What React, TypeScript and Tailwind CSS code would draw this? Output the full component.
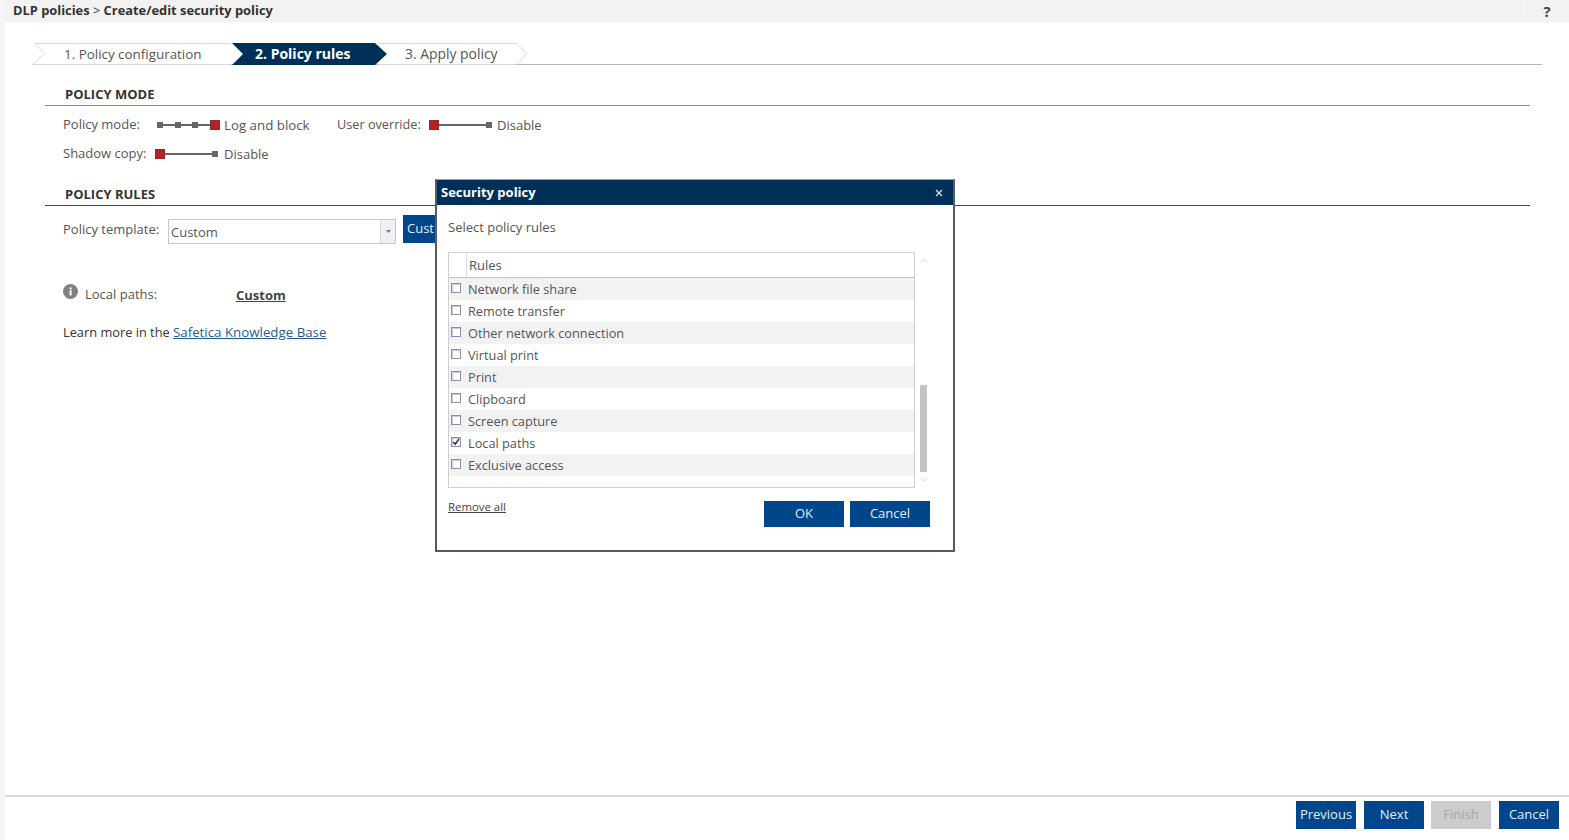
import React from "react";

const F = "[font-family:'Open_Sans','Noto_Sans',sans-serif]";

function Node({ active }: { active?: boolean }) {
  return active ? (
    <span className="h-[10px] w-[10px] shrink-0 bg-[#b72025] border border-[#8d2a2a]" />
  ) : (
    <span className="h-[6px] w-[6px] shrink-0 bg-[#666]" />
  );
}

function Slider({ stops, active, className }: { stops: number; active: number; className: string }) {
  const items = Array.from({ length: stops }, (_, i) => i);
  return (
    <div className={`relative flex h-[12px] items-center justify-between ${className}`}>
      <div className="absolute left-[3px] right-[3px] top-[5px] h-[2px] bg-[#666]" />
      {items.map((i) => (
        <span key={i} className="relative z-10 flex">
          <Node active={i === active} />
        </span>
      ))}
    </div>
  );
}

function Btn({ children, className = "", disabled }: { children: React.ReactNode; className?: string; disabled?: boolean }) {
  return (
    <button
      className={`flex items-center justify-center text-[13px] ${
        disabled ? "bg-[#cccccc] text-[#a6a6a6]" : "bg-[#00468b] text-[#e6edf5]"
      } ${className}`}
    >
      {children}
    </button>
  );
}

const rules: [string, boolean][] = [
  ["Network file share", false],
  ["Remote transfer", false],
  ["Other network connection", false],
  ["Virtual print", false],
  ["Print", false],
  ["Clipboard", false],
  ["Screen capture", false],
  ["Local paths", true],
  ["Exclusive access", false],
];

function Check({ checked }: { checked: boolean }) {
  return (
    <span className="relative mb-[2px] ml-[2px] flex h-[10px] w-[10px] shrink-0 items-center justify-center border border-[#8a90ac] bg-white shadow-[inset_1px_1px_0_#c9cde0]">
      {checked && (
        <svg className="absolute left-0 top-0" width="8" height="8" viewBox="0 0 9 9">
          <path d="M1.5 4.5L3.6 7L7.8 1.2" fill="none" stroke="#2b3350" strokeWidth="1.8" />
        </svg>
      )}
    </span>
  );
}

function Modal() {
  return (
    <div className="absolute left-[435px] top-[179px] z-20 flex h-[373px] w-[520px] flex-col border-2 border-t border-[#555b60] border-t-[#9aa0a6] bg-white">
      <div className="flex h-[25px] shrink-0 items-center justify-between bg-[#003057] pl-[4px] pr-[10px] text-[13px] font-bold text-white">
        <span>Security policy</span>
        <svg width="8" height="8" viewBox="0 0 8 8" className="mt-[1px]">
          <path d="M1 1L7 7M7 1L1 7" stroke="#dfe6ee" strokeWidth="1.2" />
        </svg>
      </div>
      <div className="mt-[13px] pl-[11px] text-[13px] leading-[18px] text-[#555]">Select policy rules</div>
      <div className="ml-[11px] mt-[16px] flex">
        <div className="h-[236px] w-[467px] border border-[#d0d0d0]">
          <div className="flex h-[25px] border-b border-[#c4c4c4]">
            <div className="w-[18px] border-r border-[#dcdcdc]" />
            <div className="pl-[2px] text-[13px] leading-[24px] text-[#44546a]">Rules</div>
          </div>
          {rules.map(([label, checked], i) => (
            <div
              key={label}
              className={`flex h-[22px] items-center gap-[7px] text-[12.75px] text-[#555] ${
                i % 2 === 0 ? "bg-[#f2f2f2]" : "bg-white"
              }`}
            >
              <Check checked={checked} />
              <span className="pt-[1px]">{label}</span>
            </div>
          ))}
        </div>
        <div className="relative ml-[4px] h-[236px] w-[9px]">
          <svg className="absolute left-0 top-[6px]" width="9" height="5" viewBox="0 0 9 5">
            <path d="M1 4.5L4.5 1L8 4.5" fill="none" stroke="#d4d4d4" />
          </svg>
          <div className="absolute left-[1px] top-[133px] h-[87px] w-[7px] bg-[#c4c4c4]" />
          <svg className="absolute left-0 top-[225px]" width="9" height="5" viewBox="0 0 9 5">
            <path d="M1 .5L4.5 4L8 .5" fill="none" stroke="#d4d4d4" />
          </svg>
        </div>
      </div>
      <div className="ml-[11px] mr-[23px] mt-[11px] flex items-start justify-between">
        <span className="text-[11.4px] leading-[16px] text-[#444] underline">Remove all</span>
        <div className="mt-[2px] flex gap-[6px]">
          <Btn className="h-[26px] w-[80px]">OK</Btn>
          <Btn className="h-[26px] w-[80px]">Cancel</Btn>
        </div>
      </div>
    </div>
  );
}

export default function App() {
  return (
    <div className={`relative flex h-[840px] w-[1569px] overflow-hidden bg-white pl-[5px] ${F}`}>
      <div className="absolute bottom-0 left-0 top-0 w-[5px] bg-[#f5f5f5]" />
      <div className="flex min-w-0 flex-1 flex-col">
        <header className="flex h-[22px] shrink-0 items-center bg-[#f2f2f2] pl-[8px] text-[12.85px] font-bold text-[#333]">
          <span className="flex-1 whitespace-pre">
            DLP policies <span className="font-normal">&gt;</span> Create/edit security policy
          </span>
          <span className="flex h-full w-[45px] items-center justify-center border-l border-white text-[15px] font-bold text-[#444]">?</span>
        </header>

        <main className="flex-1 pl-[27px] pr-[27px] pt-[21px]">
          <div className="flex h-[22px] border-b border-[#b5b5b5] text-[14px] text-[#555]">
            <div className="relative h-[22px] w-[200px]">
              <svg className="absolute left-0 top-0" width="215" height="23">
                <path d="M2.5 0.5H199M2.5 0.5L13 10.5L0.5 21.5H199" fill="none" stroke="#d9d9d9" />
              </svg>
              <span className="absolute left-[32px] top-[1px] whitespace-nowrap text-[13.4px] leading-[21px]">1. Policy configuration</span>
            </div>
            <div className="relative z-10 h-[22px] w-[146px]">
              <svg className="absolute left-0 top-0" width="160" height="22">
                <polygon points="0,0 143,0 155,11 143,22 0,22 11,11" fill="#003057" />
              </svg>
              <span className="absolute left-[23px] top-0 whitespace-nowrap font-bold leading-[21px] text-white">2. Policy rules</span>
            </div>
            <div className="relative h-[22px] w-[139px]">
              <svg className="absolute left-0 top-0" width="160" height="23">
                <path d="M0 0.5H138L149 10.5L138 21.5H0" fill="none" stroke="#d9d9d9" />
              </svg>
              <span className="absolute left-[27px] top-0 whitespace-nowrap text-[13.9px] leading-[21px]">3. Apply policy</span>
            </div>
          </div>

          <section className="ml-[13px] mr-[12px] mt-[20px]">
            <h2 className="h-[21px] border-b border-[#8a8a8a] pl-[20px] text-[13px] font-bold leading-[19px] text-[#333]">POLICY MODE</h2>
            <div className="mt-[10px] flex h-[18px] items-center pl-[18px] text-[13px] text-[#555]">
              <span className="w-[94px]">Policy mode:</span>
              <Slider stops={4} active={3} className="w-[63px]" />
              <span className="ml-[4px] w-[113px] pt-[2px] text-[13.3px]">Log and block</span>
              <span className="w-[92px] text-[12.7px]">User override:</span>
              <Slider stops={2} active={0} className="w-[63px]" />
              <span className="ml-[5px] pt-[2px]">Disable</span>
            </div>
            <div className="mt-[11px] flex h-[18px] items-center pl-[18px] text-[13px] text-[#555]">
              <span className="w-[92px]">Shadow copy:</span>
              <Slider stops={2} active={0} className="w-[63px]" />
              <span className="ml-[6px] pt-[2px]">Disable</span>
            </div>
          </section>

          <section className="ml-[13px] mr-[12px] mt-[21px]">
            <h2 className="h-[22px] border-b border-[#444] pl-[20px] text-[13px] font-bold leading-[20px] text-[#333]">POLICY RULES</h2>
            <div className="mt-[9px] flex items-start pl-[18px] text-[13px] text-[#555]">
              <span className="mt-[5px] w-[105px] leading-[18px]">Policy template:</span>
              <div className="mt-[4px] flex h-[25px] w-[228px] items-center border border-[#c8c8c8] bg-white">
                <span className="flex-1 pl-[2px] pt-[2px]">Custom</span>
                <span className="flex h-full w-[15px] items-center justify-center border-l border-[#dcdcdc] bg-[#eef0f3]">
                  <svg width="5" height="3" viewBox="0 0 5 3"><path d="M0 0H5L2.5 3Z" fill="#777" /></svg>
                </span>
              </div>
              <Btn className="ml-[7px] h-[28px] w-[40px] justify-start pl-[4px]">Cust</Btn>
            </div>
            <div className="mt-[42px] flex h-[18px] items-center pl-[18px] text-[13px] text-[#555]">
              <svg width="15" height="15" viewBox="0 0 15 15" className="mb-[7px]">
                <circle cx="7.5" cy="7.5" r="7.5" fill="#808080" />
                <rect x="6.6" y="6.4" width="2" height="5" fill="#fff" />
                <rect x="6.6" y="3.4" width="2" height="2" fill="#fff" />
              </svg>
              <span className="ml-[7px] w-[151px]">Local paths:</span>
              <span className="pt-[2px] font-bold text-[#444] underline">Custom</span>
            </div>
            <div className="mt-[19px] pl-[18px] text-[12.8px] leading-[18px] text-[#333]">
              Learn more in the <span className="text-[13.3px] text-[#1f5f8b] underline">Safetica Knowledge Base</span>
            </div>
          </section>
        </main>

        <footer className="flex h-[45px] shrink-0 items-start justify-end gap-[8px] border-t-2 border-[#dcdcdc] pr-[10px] pt-[4px]">
          <Btn className="h-[28px] w-[60px]">Previous</Btn>
          <Btn className="h-[28px] w-[60px]">Next</Btn>
          <Btn disabled className="-ml-px h-[28px] w-[60px]">Finish</Btn>
          <Btn className="h-[28px] w-[60px]">Cancel</Btn>
        </footer>
      </div>
      <Modal />
    </div>
  );
}
